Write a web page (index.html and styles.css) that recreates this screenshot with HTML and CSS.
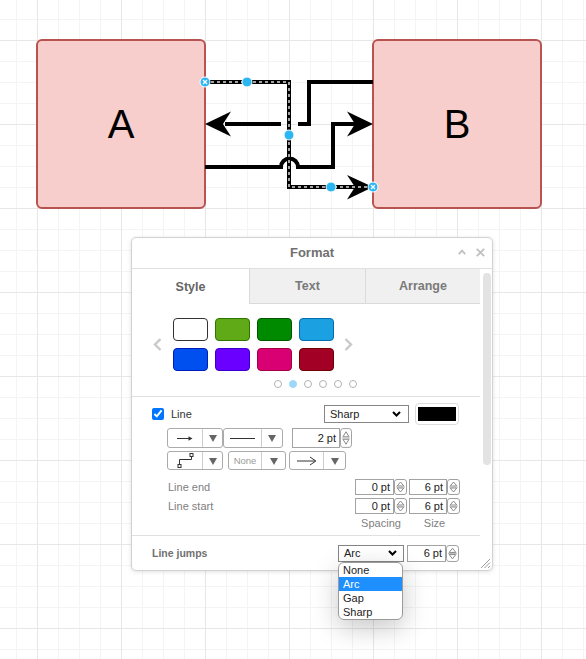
FILE: index.html
```html
<!DOCTYPE html>
<html lang="en">
<head>
<meta charset="utf-8">
<title>Format</title>
<link rel="stylesheet" href="styles.css">
</head>
<body>
<svg class="diagram" width="586" height="230" viewBox="0 0 586 230">
  <rect class="node" x="37" y="40" width="168" height="168" rx="5"/>
  <rect class="node" x="373" y="40" width="168" height="168" rx="5"/>
  <text class="label" x="121" y="138">A</text>
  <text class="label" x="457" y="138">B</text>

  <path class="edge" d="M373 82 H309 V124 H298"/>
  <path class="edge" d="M281 124 H225"/>
  <path class="head" d="M205 124 L231 111.5 L223 124 L231 136.5 Z"/>

  <path class="edge" d="M205 167 H281 A8.5 8.5 0 0 1 298 167 H333 V124 H356"/>
  <path class="head" d="M373 124 L347 111.5 L355 124 L347 136.5 Z"/>

  <path class="edge" d="M205 82 H289 V187 H356"/>
  <path class="head" d="M373 187 L347 175 L355 187 L347 199.5 Z"/>
  <path class="edge-dash" d="M205 82 H289 V187 H370"/>

  <circle class="handle" cx="247" cy="82" r="5"/>
  <circle class="handle" cx="289" cy="135" r="5"/>
  <circle class="handle" cx="331" cy="187" r="5"/>
  <circle class="handle" cx="205" cy="82" r="5"/>
  <path class="term-x" d="M203 80 L207 84 M207 80 L203 84"/>
  <circle class="handle" cx="373" cy="187" r="5"/>
  <path class="term-x" d="M371 185 L375 189 M375 185 L371 189"/>
</svg>

<div class="panel">
  <div class="panel-title">
    <span class="title-text">Format</span>
    <span class="title-icons">
      <svg width="8" height="6" viewBox="0 0 8 6"><polyline points="0.8,5.2 4,1.6 7.2,5.2" class="ti"/></svg>
      <svg width="9" height="9" viewBox="0 0 9 9"><path d="M0.8 0.8 L8.2 8.2 M8.2 0.8 L0.8 8.2" class="ti"/></svg>
    </span>
  </div>
  <div class="panel-body">
    <div class="panel-content">
      <div class="tabs">
        <div class="tab active t-style">Style</div>
        <div class="tab t-text">Text</div>
        <div class="tab t-arrange">Arrange</div>
      </div>

      <div class="swatches">
        <div class="swatch-row">
          <svg class="nav" width="9" height="13" viewBox="0 0 9 13"><polyline points="7.5,1 2,6.5 7.5,12"/></svg>
          <div class="swatch-grid">
            <div class="sw sw-white"></div>
            <div class="sw sw-green"></div>
            <div class="sw sw-dgreen"></div>
            <div class="sw sw-lblue"></div>
            <div class="sw sw-blue"></div>
            <div class="sw sw-violet"></div>
            <div class="sw sw-pink"></div>
            <div class="sw sw-red"></div>
          </div>
          <svg class="nav" width="9" height="13" viewBox="0 0 9 13"><polyline points="1.5,1 7,6.5 1.5,12"/></svg>
        </div>
        <div class="pager">
          <span class="dot"></span><span class="dot on"></span><span class="dot"></span><span class="dot"></span><span class="dot"></span><span class="dot"></span>
        </div>
      </div>

      <div class="line-sec">
        <div class="row1">
          <input type="checkbox" class="chk" checked>
          <span class="line-lbl">Line</span>
          <div class="select sharp"><span>Sharp</span>
            <svg width="9" height="6" viewBox="0 0 9 6"><polyline points="1,1 4.5,4.5 8,1" class="chev"/></svg>
          </div>
          <div class="colorbox"><div class="colorfill"></div></div>
        </div>

        <div class="row2">
          <div class="combo c1">
            <div class="ico">
              <svg width="16" height="7" viewBox="0 0 16 7"><path d="M0 3.5 H12" class="ic"/><path d="M15.5 3.5 L11.5 1.3 L11.5 5.7 Z" class="icf"/></svg>
            </div>
            <div class="drop"><span class="tri"></span></div>
          </div>
          <div class="combo c2">
            <div class="ico">
              <svg width="25" height="3" viewBox="0 0 25 3"><path d="M0 1.5 H25" class="ic"/></svg>
            </div>
            <div class="drop"><span class="tri"></span></div>
          </div>
          <div class="num w48 gap9">2 pt</div>
          <svg class="spin s12" viewBox="0 0 13 16" preserveAspectRatio="none">
            <rect x="0.5" y="0.5" width="12" height="15" rx="2.5" class="sp-box"/>
            <path d="M3.2 7 L6.5 3 L9.8 7 Z" class="sp-tri"/>
            <path d="M2 8 H11" class="sp-mid"/>
            <path d="M3.2 9 L6.5 13 L9.8 9 Z" class="sp-tri"/>
          </svg>
        </div>

        <div class="row3">
          <div class="combo c1">
            <div class="ico">
              <svg width="17" height="17" viewBox="0 0 17 17"><rect x="1" y="12.5" width="3" height="3" class="ic sq"/><path d="M2.5 12.5 V7.5 H14.5 V4.5" class="ic"/><rect x="13" y="1.5" width="3" height="3" class="ic sq"/></svg>
            </div>
            <div class="drop"><span class="tri"></span></div>
          </div>
          <div class="combo c3">
            <div class="ico none">None</div>
            <div class="drop"><span class="tri"></span></div>
          </div>
          <div class="combo c4">
            <div class="ico">
              <svg width="20" height="10" viewBox="0 0 20 10"><path d="M0 5 H18.5" class="ic"/><polyline points="13,1 18.8,5 13,9" class="ic"/></svg>
            </div>
            <div class="drop"><span class="tri"></span></div>
          </div>
        </div>

        <div class="num-row r4">
          <span class="lbl">Line end</span>
          <div class="num w39">0 pt</div>
          <svg class="spin s13" viewBox="0 0 13 16" preserveAspectRatio="none">
            <rect x="0.5" y="0.5" width="12" height="15" rx="2.5" class="sp-box"/>
            <path d="M3.2 7 L6.5 3 L9.8 7 Z" class="sp-tri"/>
            <path d="M2 8 H11" class="sp-mid"/>
            <path d="M3.2 9 L6.5 13 L9.8 9 Z" class="sp-tri"/>
          </svg>
          <div class="num w38 gap2">6 pt</div>
          <svg class="spin s13" viewBox="0 0 13 16" preserveAspectRatio="none">
            <rect x="0.5" y="0.5" width="12" height="15" rx="2.5" class="sp-box"/>
            <path d="M3.2 7 L6.5 3 L9.8 7 Z" class="sp-tri"/>
            <path d="M2 8 H11" class="sp-mid"/>
            <path d="M3.2 9 L6.5 13 L9.8 9 Z" class="sp-tri"/>
          </svg>
        </div>
        <div class="num-row r5">
          <span class="lbl">Line start</span>
          <div class="num w39">0 pt</div>
          <svg class="spin s13" viewBox="0 0 13 16" preserveAspectRatio="none">
            <rect x="0.5" y="0.5" width="12" height="15" rx="2.5" class="sp-box"/>
            <path d="M3.2 7 L6.5 3 L9.8 7 Z" class="sp-tri"/>
            <path d="M2 8 H11" class="sp-mid"/>
            <path d="M3.2 9 L6.5 13 L9.8 9 Z" class="sp-tri"/>
          </svg>
          <div class="num w38 gap2">6 pt</div>
          <svg class="spin s13" viewBox="0 0 13 16" preserveAspectRatio="none">
            <rect x="0.5" y="0.5" width="12" height="15" rx="2.5" class="sp-box"/>
            <path d="M3.2 7 L6.5 3 L9.8 7 Z" class="sp-tri"/>
            <path d="M2 8 H11" class="sp-mid"/>
            <path d="M3.2 9 L6.5 13 L9.8 9 Z" class="sp-tri"/>
          </svg>
        </div>
        <div class="caps">
          <span class="cap cap-sp">Spacing</span>
          <span class="cap cap-sz">Size</span>
        </div>
      </div>

      <div class="jumps">
        <span class="jl">Line jumps</span>
        <div class="select arc"><span>Arc</span>
          <svg width="9" height="6" viewBox="0 0 9 6"><polyline points="1,1 4.5,4.5 8,1" class="chev"/></svg>
          <ul class="menu">
            <li>None</li>
            <li class="sel">Arc</li>
            <li>Gap</li>
            <li>Sharp</li>
          </ul>
        </div>
        <div class="num w39 gap3 h17">6 pt</div>
        <svg class="spin s13 h17" viewBox="0 0 13 16" preserveAspectRatio="none">
          <rect x="0.5" y="0.5" width="12" height="15" rx="2.5" class="sp-box"/>
          <path d="M3.2 7 L6.5 3 L9.8 7 Z" class="sp-tri"/>
          <path d="M2 8 H11" class="sp-mid"/>
          <path d="M3.2 9 L6.5 13 L9.8 9 Z" class="sp-tri"/>
        </svg>
      </div>
    </div>
    <div class="scrollbar"><div class="thumb"></div></div>
  </div>
  <svg class="grip" width="12" height="12" viewBox="0 0 12 12"><path d="M11 2 L2 11 M11 5.5 L5.5 11 M11 9 L9 11"/></svg>
</div>
</body>
</html>
```

FILE: styles.css
```css
* { box-sizing: border-box; }
html, body { margin: 0; padding: 0; }
body {
  width: 586px;
  height: 659px;
  overflow: hidden;
  position: relative;
  font-family: "Liberation Sans", Arial, Helvetica, sans-serif;
  background-color: #ffffff;
  background-image:
    linear-gradient(to right, #e7e7e7 1px, transparent 1px),
    linear-gradient(to bottom, #e7e7e7 1px, transparent 1px),
    linear-gradient(to right, #f4f4f4 1px, transparent 1px),
    linear-gradient(to bottom, #f4f4f4 1px, transparent 1px);
  background-size: 84px 84px, 84px 84px, 21px 21px, 21px 21px;
  background-position: 37px 40px, 37px 40px, 16px 19px, 16px 19px;
}

/* diagram */
.diagram { position: absolute; left: 0; top: 0; }
.node { fill: #f8cecc; stroke: #b85450; stroke-width: 2; }
.label {
  font-family: "Liberation Sans", Arial, sans-serif;
  font-size: 40px;
  text-anchor: middle;
  fill: #000;
}
.edge { fill: none; stroke: #000; stroke-width: 4; }
.edge-dash { fill: none; stroke: #d9d9d9; stroke-width: 1.5; stroke-dasharray: 3 3; }
.head { fill: #000; }
.handle { fill: #29b6f2; stroke: #fff; stroke-width: 1; }
.term-x { stroke: #fff; stroke-width: 1.3; fill: none; }

/* panel */
.panel {
  position: absolute;
  left: 131px;
  top: 237px;
  width: 362px;
  height: 334px;
  background: #fff;
  border: 1px solid #d2d2d2;
  border-radius: 5px;
  box-shadow: 0 1px 4px rgba(0, 0, 0, 0.12);
}
.panel-title {
  height: 31px;
  padding-bottom: 2px;
  border-bottom: 1px solid #e0e0e0;
  display: grid;
  grid-template-columns: 1fr auto 1fr;
  align-items: center;
  font-size: 13px;
  font-weight: bold;
  color: #707070;
}
.title-text { grid-column: 2; }
.title-icons {
  grid-column: 3;
  justify-self: end;
  display: flex;
  align-items: center;
  gap: 10px;
  padding-right: 7px;
}
.title-icons svg { display: block; }
.ti { fill: none; stroke: #c0c0c0; stroke-width: 1.8; }

.panel-body { display: flex; height: 301px; }
.panel-content { width: 348px; }
.scrollbar { width: 12px; padding: 4px 0 0 3px; }
.thumb { width: 8px; height: 192px; border-radius: 4px; background: #e3e3e3; }

/* tabs */
.tabs { display: flex; height: 35px; }
.tab {
  display: flex;
  align-items: center;
  justify-content: center;
  font-size: 12.5px;
  font-weight: bold;
  color: #7a7a7a;
  background: #f0f0f0;
  border-bottom: 1px solid #dadada;
  border-left: 1px solid #dadada;
}
.tab.active { background: #fff; border: 0; color: #666; }
.t-style { width: 117px; }
.t-text { width: 116px; }
.t-arrange { width: 115px; }

/* swatches */
.swatches { padding: 14px 0 8px; border-bottom: 1px solid #e0e0e0; }
.swatch-row { display: flex; align-items: center; padding-left: 21px; }
.nav { display: block; }
.nav polyline { fill: none; stroke: #c9c9c9; stroke-width: 2.4; }
.swatch-grid {
  display: grid;
  grid-template-columns: repeat(4, 35px);
  grid-auto-rows: 23px;
  gap: 7px;
  margin: 0 10px 0 11px;
}
.sw { border-radius: 4px; border: 1px solid; }
.sw-white { background: #ffffff; border-color: #333333; }
.sw-green { background: #60a917; border-color: #2d7600; }
.sw-dgreen { background: #008a00; border-color: #005700; }
.sw-lblue { background: #1ba1e2; border-color: #006eaf; }
.sw-blue { background: #0050ef; border-color: #001dbc; }
.sw-violet { background: #6a00ff; border-color: #3700cc; }
.sw-pink { background: #d80073; border-color: #a50040; }
.sw-red { background: #a20025; border-color: #6f0000; }
.pager { display: flex; gap: 7px; margin: 9px 0 0 142px; height: 8px; }
.dot { width: 8px; height: 8px; border-radius: 50%; border: 1px solid #b3b3b3; background: #fff; }
.dot.on { background: #9ed8f7; border-color: #9ed8f7; }

/* line section */
.line-sec { padding: 6px 0 6px; border-bottom: 1px solid #e0e0e0; }
.row1 { display: flex; align-items: center; height: 21px; padding: 0 21px 0 20px; }
.chk { width: 12px; height: 12px; margin: 0; accent-color: #0075ff; }
.line-lbl { flex: 1; margin-left: 7px; font-size: 11px; color: #333; }
.select {
  position: relative;
  display: flex;
  align-items: center;
  justify-content: space-between;
  border: 1px solid #858585;
  background: #fff;
  font-size: 11px;
  color: #222;
}
.select svg { display: block; }
.chev { fill: none; stroke: #000; stroke-width: 2; }
.sharp { width: 85px; height: 18px; padding: 0 7px 0 5px; }
.colorbox {
  width: 44px;
  height: 22px;
  margin-left: 6px;
  border: 1px solid #dcdcdc;
  border-radius: 4px;
  padding: 3px 2px;
}
.colorfill { width: 100%; height: 100%; background: #000; }

.row2 { display: flex; height: 20px; margin-top: 4px; padding-left: 35px; }
.row3 { display: flex; height: 19px; margin-top: 3px; padding-left: 35px; }
.combo { display: flex; height: 100%; border: 1px solid #ababab; border-radius: 3px; background: #fff; }
.combo .ico { display: flex; align-items: center; justify-content: center; }
.combo .drop {
  flex: 1;
  display: flex;
  align-items: center;
  justify-content: center;
  border-left: 1px solid #cdcdcd;
}
.tri {
  width: 0;
  height: 0;
  border-left: 4px solid transparent;
  border-right: 4px solid transparent;
  border-top: 7px solid #666;
  margin-top: 1px;
}
.c1 { width: 56px; }
.c1 .ico { width: 34px; }
.c2 { width: 60px; }
.c2 .ico { width: 37px; }
.c3 { width: 58px; margin-left: 5px; }
.c3 .ico { width: 32px; }
.c4 { width: 57px; margin-left: 3px; }
.c4 .ico { width: 33px; }
.ico svg { display: block; }
.ic { fill: none; stroke: #333; stroke-width: 1; }
.ic.sq { fill: #fff; }
.icf { fill: #333; }
.ico.none { font-size: 9.5px; color: #9a9a9a; }

.num {
  display: flex;
  align-items: center;
  justify-content: flex-end;
  height: 100%;
  padding-right: 3px;
  border: 1px solid #a3a3a3;
  background: #fff;
  font-size: 11px;
  color: #222;
}
.w48 { width: 48px; }
.w39 { width: 39px; }
.w38 { width: 38px; }
.gap9 { margin-left: 9px; }
.gap3 { margin-left: 3px; }
.gap2 { margin-left: 2px; }
.spin { display: block; height: 100%; }
.s12 { width: 12px; }
.s13 { width: 13px; }
.sp-box { fill: #fff; stroke: #a0a0a0; vector-effect: non-scaling-stroke; }
.sp-tri { fill: none; stroke: #8a8a8a; vector-effect: non-scaling-stroke; }
.sp-mid { stroke: #bdbdbd; vector-effect: non-scaling-stroke; }

.num-row { display: flex; align-items: center; height: 16px; padding: 0 20px 0 36px; }
.r4 { margin-top: 9px; }
.r5 { margin-top: 3px; }
.num-row .lbl { flex: 1; font-size: 11px; color: #808080; }
.caps { display: flex; justify-content: flex-end; gap: 2px; height: 12px; margin-top: 3px; padding-right: 20px; }
.cap { font-size: 11px; line-height: 12px; color: #808080; text-align: center; }
.cap-sp { width: 52px; }
.cap-sz { width: 51px; }

/* line jumps */
.jumps { display: flex; align-items: center; height: 34px; padding: 0 21px 0 20px; }
.jl { flex: 1; font-size: 10.5px; font-weight: bold; color: #707070; }
.arc { width: 66px; height: 17px; padding: 0 6px 0 5px; }
.h17 { height: 17px; }
.menu {
  position: absolute;
  left: -1px;
  top: calc(100% + 1px);
  width: 65px;
  margin: 0;
  padding: 0;
  list-style: none;
  background: #fff;
  border: 1px solid #9b9b9b;
  border-radius: 6px;
  overflow: hidden;
  box-shadow: 0 8px 26px rgba(0, 0, 0, 0.22);
  z-index: 5;
}
.menu li { height: 14px; line-height: 14px; padding-left: 4px; font-size: 11px; color: #222; }
.menu li.sel { background: #1e8fff; color: #fff; }

.grip { position: absolute; right: 1px; bottom: 1px; }
.grip path { stroke: #9a9a9a; stroke-width: 1; fill: none; }
```
